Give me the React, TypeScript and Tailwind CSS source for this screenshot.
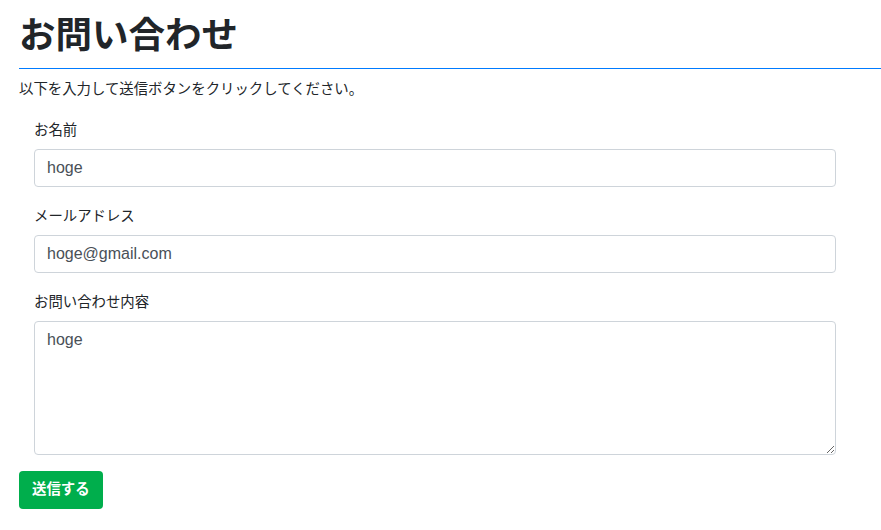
export default function App() {
  const font = { fontFamily: '"Liberation Sans", "Noto Sans CJK JP", sans-serif' };
  return (
    <div className="bg-white min-h-screen pl-[19px] text-[#212529]" style={font}>
      <h1 className="pt-[14px] pb-[10px] text-[36.5px] leading-[44px] font-bold">お問い合わせ</h1>
      <div className="h-px bg-[#007bff]" />
      <p className="mt-[9px] text-[14.4px] leading-[22px]">
        以下を入力して送信ボタンをクリックしてください。
      </p>
      <form className="pl-[15px] pr-[45px] mt-[19px]" onSubmit={(e) => e.preventDefault()}>
        <div className="mb-[18px]">
          <label className="block text-[14.4px] leading-[22px] mb-[8px]">お名前</label>
          <input
            readOnly
            value="hoge"
            className="block w-full h-[38px] px-[12px] border border-[#ced4da] rounded-[4px] text-[16px] text-[#495057] outline-none"
          />
        </div>
        <div className="mb-[18px]">
          <label className="block text-[14.4px] leading-[22px] mb-[8px]">メールアドレス</label>
          <input
            readOnly
            value="hoge@gmail.com"
            className="block w-full h-[38px] px-[12px] border border-[#ced4da] rounded-[4px] text-[16px] text-[#495057] outline-none"
          />
        </div>
        <div className="mb-[16px]">
          <label className="block text-[14.4px] leading-[22px] mb-[8px]">お問い合わせ内容</label>
          <textarea
            readOnly
            value="hoge"
            className="block w-full h-[134px] px-[12px] py-[6px] border border-[#ced4da] rounded-[4px] text-[16px] leading-[24px] text-[#495057] outline-none"
          />
        </div>
      </form>
      <button className="h-[38px] px-[13px] rounded-[4px] bg-[#00ae4c] text-white font-bold text-[14.4px]">
        送信する
      </button>
    </div>
  );
}
